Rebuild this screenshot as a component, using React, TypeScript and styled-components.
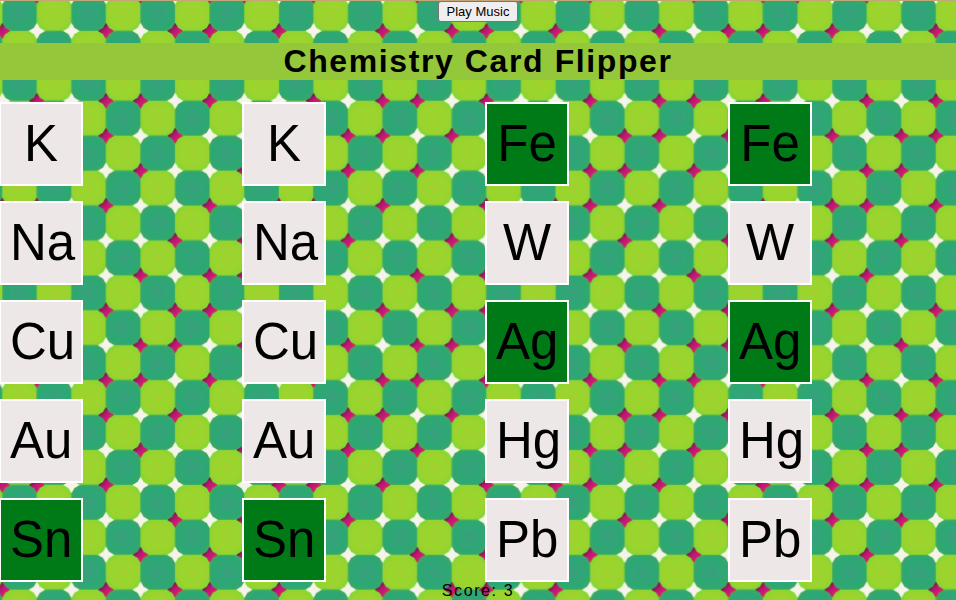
import React, { useState } from "react";
import styled, { createGlobalStyle } from "styled-components";

const GlobalStyle = createGlobalStyle`
  html, body { margin: 0; }
  body {
    font-family: "Liberation Sans", Arial, Helvetica, sans-serif;
    letter-spacing: 0.1rem;
    color: #000;
  }
`;

const Page = styled.div`
  position: relative;
  box-sizing: border-box;
  min-height: 100vh;
  overflow: hidden;
  isolation: isolate;
  border-top: 1px solid #c4a678;
`;

const Backdrop = styled.svg`
  position: absolute;
  inset: 0;
  width: 100%;
  height: 100%;
  z-index: -1;
`;

const Toolbar = styled.div`
  display: flex;
  justify-content: center;
`;

const MusicButton = styled.button`
  height: 21px;
  padding: 0 8px;
  border: 1px solid #767676;
  border-radius: 3px;
  background: #efefef;
  color: #000;
  font: 13px/19px "Liberation Sans", Arial, sans-serif;
  letter-spacing: normal;
`;

const Title = styled.h1`
  margin: 21px 0 22px;
  background: #94c73a;
  font-size: 32px;
  line-height: 37px;
  text-align: center;
`;

const Board = styled.main`
  display: grid;
  grid-template-columns: repeat(4, 1fr);
  gap: 15px;
  margin-left: -1px;
`;

const Card = styled.button<{ $matched: boolean }>`
  box-sizing: border-box;
  width: 84px;
  height: 84px;
  padding: 0 9px;
  border: 2px solid #fff;
  background: ${(p) => (p.$matched ? "#007a17" : "#ede7e7")};
  color: #000;
  font-family: inherit;
  font-size: 51px;
  line-height: 80px;
  letter-spacing: normal;
  text-align: center;
`;

const Score = styled.p`
  margin: 0;
  font-size: 16px;
  line-height: 18px;
  text-align: center;
`;

const W = 34.58;
const H = 34.92;
const STARS = "WMWWMWMM";
const steps = Array.from({ length: 9 }, (_, i) => i);
const starPath =
  "M0-7.5L1.9-4.4L2.7-2.7L4.4-1.9L7.5 0L4.4 1.9L2.7 2.7L1.9 4.4L0 7.5L-1.9 4.4L-2.7 2.7L-4.4 1.9L-7.5 0L-4.4-1.9L-2.7-2.7L-1.9-4.4Z";

function Mosaic() {
  return (
    <Backdrop aria-hidden="true">
      <defs>
        <radialGradient id="teal">
          <stop offset="0" stopColor="#3a9f7c" />
          <stop offset="0.5" stopColor="#30a678" />
          <stop offset="0.9" stopColor="#2ca872" />
          <stop offset="1" stopColor="#38a56c" />
        </radialGradient>
        <radialGradient id="lime">
          <stop offset="0" stopColor="#a2d02e" />
          <stop offset="0.5" stopColor="#99d62d" />
          <stop offset="0.9" stopColor="#9dd22d" />
          <stop offset="1" stopColor="#86d832" />
        </radialGradient>
        <linearGradient id="berry" x1="0" y1="0" x2="1" y2="1">
          <stop offset="0.2" stopColor="#5e1c3c" />
          <stop offset="0.42" stopColor="#b5146e" />
          <stop offset="0.6" stopColor="#cf147a" />
          <stop offset="0.8" stopColor="#c8403c" />
        </linearGradient>
        <filter id="soft" x="0" y="0" width="1" height="1">
          <feGaussianBlur stdDeviation="0.6" edgeMode="duplicate" />
        </filter>
        <pattern
          id="mosaic"
          width={W * 8}
          height={H * 8}
          patternUnits="userSpaceOnUse"
          patternTransform="translate(2.3 -4.9)"
        >
          <rect width={W * 8} height={H * 8} fill="#9bd42d" />
          {steps.slice(0, 8).map((r) =>
            steps.slice(0, 8).map((c) => {
              const teal = (r + c) % 2 === 0;
              return (
                <rect
                  key={`${r}-${c}`}
                  x={c * W}
                  y={r * H}
                  width={W}
                  height={H}
                  rx={teal ? 10 : 2}
                  fill={teal ? "url(#teal)" : "url(#lime)"}
                  stroke={teal ? "#4cb556" : "none"}
                  strokeWidth="1"
                />
              );
            })
          )}
          {steps.map((r) =>
            steps.map((c) => {
              const berry = STARS[(r + c) % 8] === "M";
              return (
                <path
                  key={`${r}-${c}`}
                  transform={`translate(${c * W} ${r * H})`}
                  d={starPath}
                  fill={berry ? "url(#berry)" : "#f6f4ea"}
                  stroke={berry ? "url(#berry)" : "#eef3dc"}
                  strokeWidth="0.8"
                />
              );
            })
          )}
        </pattern>
      </defs>
      <rect width="100%" height="100%" fill="url(#mosaic)" filter="url(#soft)" />
    </Backdrop>
  );
}

const CARDS = ["K", "K", "Fe", "Fe", "Na", "Na", "W", "W", "Cu", "Cu", "Ag", "Ag", "Au", "Au", "Hg", "Hg", "Sn", "Sn", "Pb", "Pb"];

export default function App() {
  const [matched, setMatched] = useState<string[]>(["Fe", "Ag", "Sn"]);
  const [picked, setPicked] = useState<number | null>(null);

  const pick = (index: number) => {
    const symbol = CARDS[index];
    if (matched.includes(symbol) || picked === index) return;
    if (picked === null) {
      setPicked(index);
      return;
    }
    if (CARDS[picked] === symbol) setMatched([...matched, symbol]);
    setPicked(null);
  };

  return (
    <>
      <GlobalStyle />
      <Page>
        <Mosaic />
        <Toolbar>
          <MusicButton type="button">Play Music</MusicButton>
        </Toolbar>
        <Title>Chemistry Card Flipper</Title>
        <Board>
          {CARDS.map((symbol, i) => (
            <Card
              key={i}
              type="button"
              $matched={matched.includes(symbol)}
              onClick={() => pick(i)}
            >
              {symbol}
            </Card>
          ))}
        </Board>
        <Score>Score: {matched.length}</Score>
      </Page>
    </>
  );
}
